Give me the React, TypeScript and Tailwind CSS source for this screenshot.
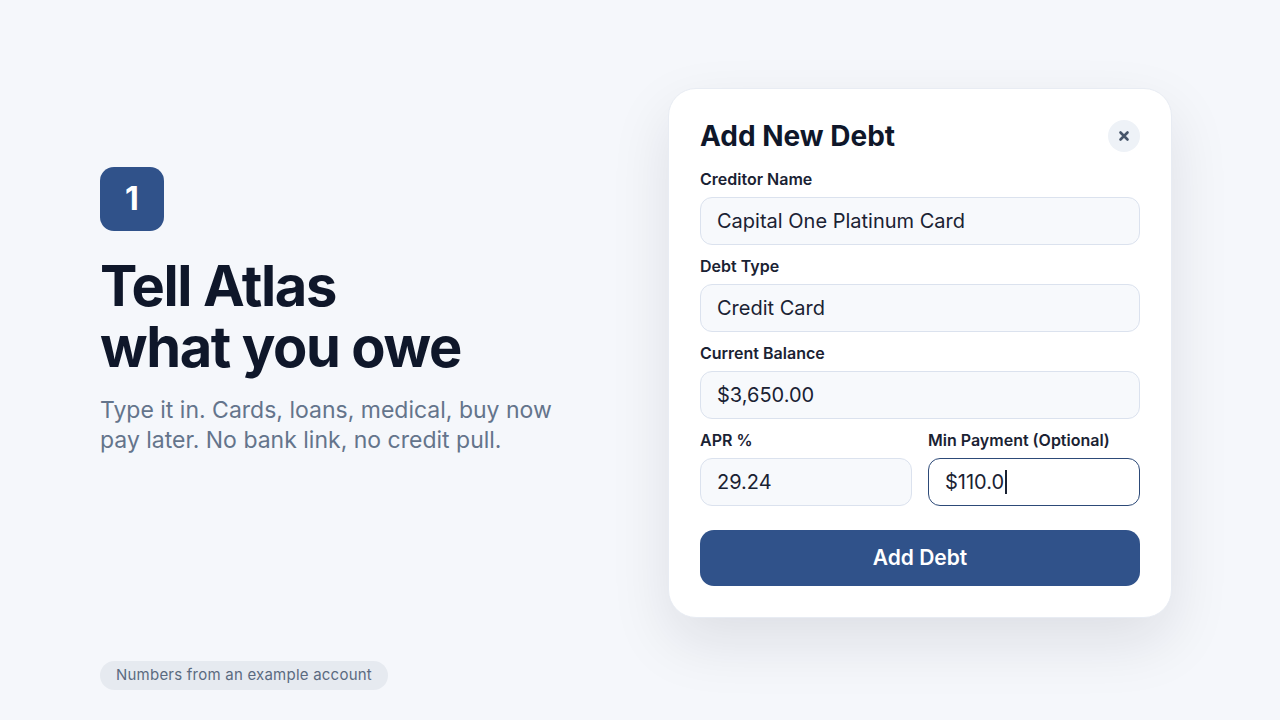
import React from 'react'

const font = { fontFamily: 'Inter, "Noto Sans", sans-serif' }

function Field({ label, value, focused }: { label: string; value: string; focused?: boolean }) {
  return (
    <div className="flex flex-col gap-[9px]">
      <label className="text-[16px] leading-[18px] font-semibold text-[#1a2233]">{label}</label>
      <div
        className={`h-[48px] rounded-[12px] px-[16px] flex items-center text-[20px] text-[#1a2233] ${
          focused
            ? 'bg-white border-[1.5px] border-[#2d4a78]'
            : 'bg-[#f7f9fc] border border-[#dbe2ee]'
        }`}
      >
        <span>{value}</span>
        {focused && <span className="w-[1.5px] h-[24px] bg-[#1a2233] ml-[1px]" />}
      </div>
    </div>
  )
}

export default function App() {
  return (
    <div style={font} className="w-[1280px] h-[720px] bg-[#f5f7fb] flex flex-col pl-[100px] pb-[30px] overflow-hidden">
      <div className="flex">
        {/* Left copy */}
        <div className="w-[568px] pt-[167px] flex flex-col">
          <div className="w-[64px] h-[64px] rounded-[14px] bg-[#30528a] flex items-center justify-center text-white text-[32px] font-bold">
            1
          </div>
          <h1 className="mt-[25px] text-[56px] leading-[61px] font-bold tracking-[-0.025em] text-[#0f172a]">
            Tell Atlas
            <br />
            what you owe
          </h1>
          <p className="mt-[17px] text-[23px] leading-[30px] text-[#64748b]">
            Type it in. Cards, loans, medical, buy now
            <br />
            pay later. No bank link, no credit pull.
          </p>
        </div>

        {/* Form card */}
        <div className="mt-[88px] w-[504px] bg-white rounded-[28px] border border-[#e8ecf3] shadow-[0_24px_60px_rgba(15,23,42,0.10)] px-[31px] pt-[30px] pb-[31px] flex flex-col">
          <div className="flex items-center justify-between">
            <h2 className="text-[28px] leading-[34px] font-bold text-[#0f172a]">Add New Debt</h2>
            <button className="w-[32px] h-[32px] rounded-full bg-[#eef2f7] flex items-center justify-center">
              <svg width="12" height="12" viewBox="0 0 12 12" fill="none">
                <path d="M2.5 2.5l7 7M9.5 2.5l-7 7" stroke="#475569" strokeWidth="2.6" strokeLinecap="round" />
              </svg>
            </button>
          </div>

          <div className="mt-[17px] flex flex-col gap-[12px]">
            <Field label="Creditor Name" value="Capital One Platinum Card" />
            <Field label="Debt Type" value="Credit Card" />
            <Field label="Current Balance" value="$3,650.00" />
            <div className="grid grid-cols-2 gap-[16px]">
              <Field label="APR %" value="29.24" />
              <Field label="Min Payment (Optional)" value="$110.0" focused />
            </div>
          </div>

          <button className="mt-[24px] h-[56px] rounded-[14px] bg-[#30528a] text-white text-[21px] font-semibold">
            Add Debt
          </button>
        </div>
      </div>

      <div className="mt-auto self-start h-[29px] px-[16px] rounded-full bg-[#e6eaf0] flex items-center text-[15px] tracking-[0.015em] text-[#5b6a80]">
        Numbers from an example account
      </div>
    </div>
  )
}
